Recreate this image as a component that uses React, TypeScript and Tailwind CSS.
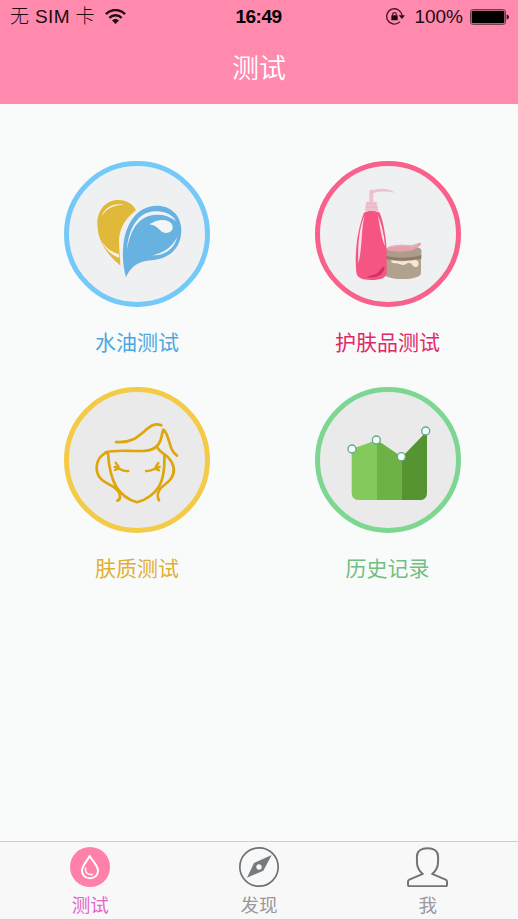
import type { ReactNode } from 'react';

const ringBase =
  'flex h-[146px] w-[146px] items-center justify-center rounded-full border-[5px]';

function OilWaterIcon() {
  return (
    <svg viewBox="39 33 408 408" className="h-full w-full" fill="none">
      <path
        d="M193 332C170 311 124 272 124 205C124 164 151 135 186 135C214 135 232 149 240 166C207 190 189 224 189 258C189 285 193 308 193 332Z"
        fill="#e0b83a"
      />
      <path d="M137 184C146 158 169 144 204 149C169 150 150 162 137 184Z" fill="#f4f1e6" />
      <path d="M134 253C146 278 166 291 189 298L190 309C164 299 145 282 134 253Z" fill="#f4f1e6" />
      <path
        d="M210 367C203 340 198 310 202 273C208 204 245 153 301 152C347 152 376 183 376 225C376 278 342 311 287 316C246 319 224 335 210 367Z"
        fill="#68b2e1"
      />
      <path
        d="M213 285C216 225 244 170 298 169C326 168 349 179 360 198C338 181 315 177 292 180C247 186 222 226 213 285Z"
        fill="#f0f4f6"
      />
      <path
        d="M280 208C304 193 331 190 345 204C356 218 349 234 329 234C311 234 309 211 280 208Z"
        fill="#f3f6f7"
      />
      <path d="M364 245C355 283 325 302 289 301C325 293 348 276 364 245Z" fill="#f0f4f6" />
    </svg>
  );
}

function SkincareIcon() {
  return (
    <svg viewBox="39 33 408 408" className="h-full w-full" fill="none">
      <path
        d="M187 141V110C187 104 193 103 200 105C223 98 249 101 263 113C243 108 223 108 202 113L199 117V141Z"
        fill="#edc1cd"
      />
      <path d="M178 140H208L214 168H174Z" fill="#edc1cd" />
      <path d="M177 146H211M175 157H213" stroke="#e3b4c2" strokeWidth="2" />
      <path
        d="M230 290H342V354C342 366 315 372 287 372C258 372 230 367 230 354Z"
        fill="#b0a28e"
      />
      <path d="M234 286C234 268 343 267 343 286V304C312 312 265 312 234 304Z" fill="#ab9d88" />
      <path d="M234 302C266 310 314 310 343 301V311C312 318 265 318 234 311Z" fill="#937a67" />
      <path
        d="M239 282C243 270 285 267 315 271L338 263C345 263 343 270 337 273L325 281C314 293 245 293 239 282Z"
        fill="#e6a0ae"
      />
      <path d="M253 276C277 270 300 271 315 275L331 270" stroke="#efb6c0" strokeWidth="3" />
      <path
        d="M253 316C270 320 301 319 326 314C337 317 338 333 328 336C319 338 317 327 309 324C300 321 298 331 288 330C278 329 276 325 265 325C256 325 251 321 253 316Z"
        fill="#f5e7d7"
      />
      <path
        d="M171 173C180 166 208 166 218 173C229 199 238 250 239 288V353C239 367 223 375 193 375C164 375 149 368 148 352C142 294 151 224 171 173Z"
        fill="#f45583"
      />
      <path
        d="M233 334C231 359 212 370 180 367C190 359 203 362 212 353C222 344 224 337 233 334Z"
        fill="#cf3262"
      />
      <path d="M173 181C158 214 151 266 154 325C167 277 162 221 173 181Z" fill="#fbdfe7" />
      <path d="M212 181C223 205 231 235 234 274C223 249 219 213 212 181Z" fill="#fbdfe7" />
    </svg>
  );
}

function FaceIcon() {
  return (
    <svg
      viewBox="39 36 408 408"
      className="h-full w-full"
      fill="none"
      stroke="#dea50c"
      strokeWidth="8"
      strokeLinecap="round"
      strokeLinejoin="round"
    >
      <path d="M180 186C224 190 243 173 266 153C284 137 295 128 316 136" />
      <path d="M149 217C171 210 200 212 232 213H262C290 212 306 202 314 180C318 168 318 157 322 149C335 157 338 187 347 207C352 217 356 223 363 227" />
      <path d="M155 217C126 226 118 255 124 278C129 300 150 308 167 317C180 325 192 337 192 350C192 357 188 361 184 362" />
      <path d="M156 218C158 259 164 291 181 321C195 343 219 360 243 367C270 359 295 342 309 319C325 293 326 253 325 223" />
      <path d="M303 200C309 215 325 220 337 233C355 253 359 275 345 296C337 309 320 316 312 327C303 339 304 351 309 361" />
      <path d="M176 261C189 261 195 275 217 273M179 248L188 261M177 270L188 266" strokeWidth="7" />
      <path d="M311 261C298 261 291 275 270 273M307 249L299 261M309 271L299 267" strokeWidth="7" />
    </svg>
  );
}

function HistoryIcon() {
  const points = [
    [135, 207],
    [208, 180],
    [283, 230],
    [356, 153],
  ];

  return (
    <svg viewBox="39 36 408 408" className="h-full w-full" fill="none">
      <path d="M134 207L210 180V360H156Q134 360 134 338Z" fill="#84c95b" />
      <path d="M210 180L285 231V360H210Z" fill="#6db244" />
      <path d="M285 231L360 153V338Q360 360 338 360H285Z" fill="#559431" />
      {points.map(([x, y]) => (
        <circle key={x} cx={x} cy={y} r="12" fill="#f5fffb" stroke="#63a78c" strokeWidth="4" />
      ))}
    </svg>
  );
}

function WifiIcon() {
  return (
    <svg viewBox="0 0 60 44" className="ml-[10px] h-[15px] w-[21px]" fill="none" stroke="#1d0c12">
      <path d="M2 15C17 -1 43 -1 58 15" strokeWidth="7" />
      <path d="M12 26C22 16 38 16 48 26" strokeWidth="7" />
      <path d="M20 34C26 28 34 28 40 34L30 44Z" fill="#1d0c12" stroke="none" />
    </svg>
  );
}

function RotationLockIcon() {
  return (
    <svg viewBox="0 0 57 51" className="h-[17px] w-[19px]" fill="none" stroke="#4a1628">
      <path d="M42 41A23 23 0 1 1 48 23" strokeWidth="4" />
      <path d="M38 22H57L48 33Z" fill="#2b0e18" stroke="none" />
      <rect x="16" y="22" width="19" height="15" rx="1" fill="#1d0c12" stroke="none" />
      <path d="M20 24V19C20 12 31 12 31 19V24" strokeWidth="3.5" />
    </svg>
  );
}

function BatteryIcon() {
  return (
    <svg viewBox="0 0 118 48" className="ml-[7px] h-[16px] w-[39px]" fill="none">
      <rect x="1.5" y="1.5" width="106" height="45" rx="7" stroke="#6b3a49" strokeWidth="3" />
      <rect x="5" y="5" width="99" height="38" rx="4" fill="#000" />
      <path d="M111 16Q118 19 118 24Q118 29 111 32Z" fill="#2b0e18" />
    </svg>
  );
}

function DropTabIcon() {
  return (
    <svg viewBox="0 0 120 120" className="h-10 w-10" fill="none">
      <circle cx="60" cy="60" r="60" fill="#ff80a9" />
      <path
        d="M59 27C51 42 36 56 36 71C36 84 46 94 60 94C74 94 84 84 84 71C84 56 67 42 59 27Z"
        stroke="#fff"
        strokeWidth="6"
        strokeLinejoin="round"
      />
      <path d="M47 63C44 77 53 84 67 83" stroke="#ffe7ef" strokeWidth="5" strokeLinecap="round" />
    </svg>
  );
}

function CompassTabIcon() {
  return (
    <svg viewBox="0 0 120 120" className="h-10 w-10" fill="none">
      <circle cx="60" cy="60" r="57.5" stroke="#6e7275" strokeWidth="5" />
      <path
        fillRule="evenodd"
        d="M98 24L73 71L24 92L45 48ZM60 52A8 8 0 1 0 60 68A8 8 0 1 0 60 52Z"
        fill="#747a7e"
      />
    </svg>
  );
}

function ProfileTabIcon() {
  return (
    <svg viewBox="0 0 124 120" className="h-10 w-[41px]" fill="none">
      <path
        d="M48 81C35 71 30 58 30 43V28C30 12 43 3 62 3C81 3 94 12 94 28V43C94 58 89 71 76 81L117 98Q121 100 121 104V114Q121 118 117 118H7Q3 118 3 114V104Q3 100 7 98Z"
        stroke="#737373"
        strokeWidth="6"
        strokeLinejoin="round"
      />
    </svg>
  );
}

interface TestEntryProps {
  label: string;
  ring: string;
  text: string;
  icon: ReactNode;
}

function TestEntry({ label, ring, text, icon }: TestEntryProps) {
  return (
    <button className="flex w-[146px] flex-col items-center">
      <span className={`${ringBase} ${ring}`}>{icon}</span>
      <span className={`mt-[21px] h-[30px] text-[21px] leading-[30px] whitespace-nowrap ${text}`}>
        {label}
      </span>
    </button>
  );
}

const entries: TestEntryProps[] = [
  {
    label: '水油测试',
    ring: 'border-[#75c9f8] bg-[#eff0f1]',
    text: 'text-[#4ba7df]',
    icon: <OilWaterIcon />,
  },
  {
    label: '护肤品测试',
    ring: 'border-[#f9608b] bg-[#eff0f1]',
    text: 'text-[#df2868]',
    icon: <SkincareIcon />,
  },
  {
    label: '肤质测试',
    ring: 'border-[#f4cb46] bg-[#eaeaea]',
    text: 'text-[#e0af35]',
    icon: <FaceIcon />,
  },
  {
    label: '历史记录',
    ring: 'border-[#7dd793] bg-[#eaeaeb]',
    text: 'text-[#70bf83]',
    icon: <HistoryIcon />,
  },
];

const tabs = [
  { label: '测试', icon: <DropTabIcon />, color: 'text-[#e266c8]' },
  { label: '发现', icon: <CompassTabIcon />, color: 'text-[#999]' },
  { label: '我', icon: <ProfileTabIcon />, color: 'text-[#999]' },
];

export default function App() {
  return (
    <div className="flex h-[920px] w-[518px] flex-col overflow-hidden bg-[#f9fbfb] font-['Liberation_Sans','Noto_Sans_CJK_SC',sans-serif]">
      <header className="h-[104px] shrink-0 bg-[#ff8aae]">
        <div className="grid h-[33px] grid-cols-3 items-center pr-[9px] pl-[10px] text-[19px] text-[#1d0c12]">
          <div className="flex items-center whitespace-nowrap">
            <span className="pt-0.5 font-light tracking-[0.35px]">无 SIM 卡</span>
            <WifiIcon />
          </div>
          <span className="pt-0.5 pr-0.5 text-center font-bold tracking-[-0.5px] text-black">16:49</span>
          <div className="flex items-center justify-end">
            <RotationLockIcon />
            <span className="ml-[9px] pt-0.5">100%</span>
            <BatteryIcon />
          </div>
        </div>
        <h1 className="text-center text-[27px] leading-[72px] font-[350] text-white">测试</h1>
      </header>

      <main className="grid flex-1 grid-cols-[146px_146px] content-start justify-start gap-x-[104.5px] gap-y-[29px] pt-[57px] pl-16">
        {entries.map((entry) => (
          <TestEntry key={entry.label} {...entry} />
        ))}
      </main>

      <nav className="flex h-[79px] shrink-0 border-y border-[#cfcfcf] bg-[#f8f8f8] px-1.5 pt-[5px]">
        {tabs.map((tab) => (
          <button key={tab.label} className="flex flex-1 flex-col items-center">
            {tab.icon}
            <span className={`mt-[5px] text-[18.5px] leading-[27px] ${tab.color}`}>{tab.label}</span>
          </button>
        ))}
      </nav>
    </div>
  );
}
